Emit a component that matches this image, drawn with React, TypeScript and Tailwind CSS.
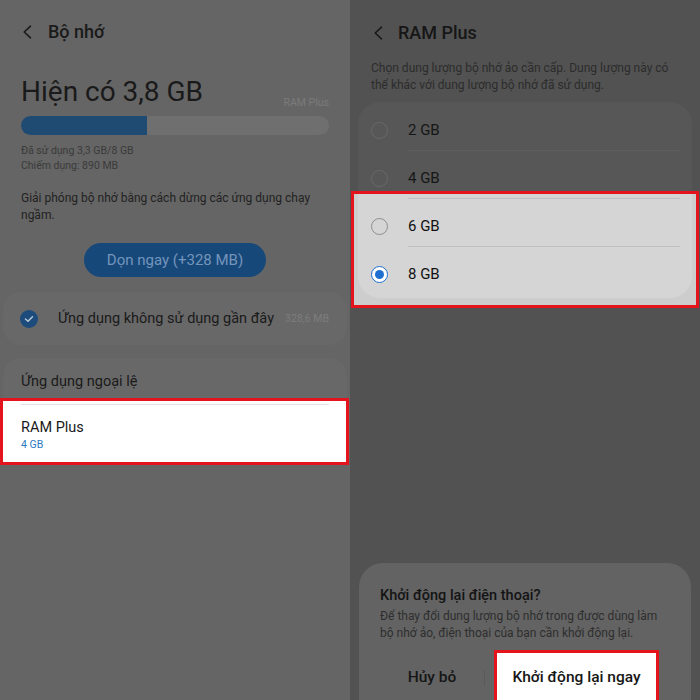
function Chevron() {
  return (
    <svg width="10" height="14" viewBox="0 0 10 14" fill="none" className="shrink-0">
      <path d="M8.5 1.2 L2.2 7 L8.5 12.8" stroke="#1a1a1a" strokeWidth="1.6" strokeLinecap="round" strokeLinejoin="round" />
    </svg>
  );
}

function Radio({ checked, light }: { checked?: boolean; light?: boolean }) {
  if (checked) {
    return (
      <span className="flex h-[17px] w-[17px] shrink-0 items-center justify-center rounded-full border-[1.5px] border-[#1e6fd0] bg-white">
        <span className="h-[9px] w-[9px] rounded-full bg-[#1e6fd0]" />
      </span>
    );
  }
  return (
    <span
      className={
        light
          ? "h-[17px] w-[17px] shrink-0 rounded-full border-[1.5px] border-[#8e8e8e]"
          : "h-[17px] w-[17px] shrink-0 rounded-full border-[1.5px] border-[#696969]"
      }
    />
  );
}

function SizeRow({
  label,
  className,
  checked,
  light,
}: {
  label: string;
  className: string;
  checked?: boolean;
  light?: boolean;
}) {
  return (
    <div className={`flex items-center gap-[20px] pl-[13px] ${className}`}>
      <Radio checked={checked} light={light} />
      <span className={light ? "text-[15px] text-[#111]" : "text-[15px] text-[#161616]"}>{label}</span>
    </div>
  );
}

export default function App() {
  return (
    <div className="flex h-[700px] w-[700px] overflow-hidden font-[Roboto,'Noto_Sans',sans-serif]">
      {/* Bộ nhớ */}
      <section className="flex w-[350px] flex-col bg-[#656565] text-[#1a1a1a]">
        <header className="flex h-[64px] items-center gap-[16px] pl-[22px]">
          <Chevron />
          <h1 className="text-[18px] font-medium leading-[24px]">Bộ nhớ</h1>
        </header>

        <div className="mt-[11px] flex items-end justify-between px-[21px]">
          <p className="text-[28px] leading-[34px]">Hiện có 3,8 GB</p>
          <span className="text-[10.5px] leading-[13px] text-[#7b7b7b]">RAM Plus</span>
        </div>

        <div className="mx-[21px] mt-[7px] h-[19px] overflow-hidden rounded-full bg-[#6f6f6f]">
          <div className="h-full w-[126px] bg-[#1f4a72]" />
        </div>

        <div className="mt-[8px] px-[21px] text-[10.5px] leading-[15px] text-[#3a3a3a]">
          <p>Đã sử dụng 3,3 GB/8 GB</p>
          <p>Chiếm dụng: 890 MB</p>
        </div>

        <p className="mt-[17px] whitespace-nowrap px-[21px] text-[12px] leading-[17px] text-[#222]">
          Giải phóng bộ nhớ bằng cách dừng các ứng dụng chạy
          <br />
          ngầm.
        </p>

        <button
          type="button"
          className="mx-auto mt-[19px] h-[34px] w-[182px] rounded-full bg-[#17487a] text-[15px] text-[#7495bb]"
        >
          Dọn ngay (+328 MB)
        </button>

        <div className="mx-[3px] mt-[15px] flex h-[53px] items-center rounded-[18px] bg-[#686868] pl-[17px] pr-[18px]">
          <span className="flex h-[18px] w-[18px] shrink-0 items-center justify-center rounded-full bg-[#1c4b7c]">
            <svg width="10" height="8" viewBox="0 0 10 8" fill="none">
              <path d="M1.5 4 L4 6.3 L8.5 1.7" stroke="#b8c6d4" strokeWidth="1.5" strokeLinecap="round" strokeLinejoin="round" />
            </svg>
          </span>
          <span className="ml-[20px] flex-1 text-[14.5px]">Ứng dụng không sử dụng gần đây</span>
          <span className="text-[10.5px] text-[#7d7d7d]">328,6 MB</span>
        </div>

        <div className="mx-[3px] mt-[13px] rounded-t-[18px] bg-[#686868] pb-[6px] pl-[18px] pt-[14px]">
          <p className="text-[14.5px] leading-[20px]">Ứng dụng ngoại lệ</p>
        </div>

        <div className="h-[67px] w-[349px] border-[3px] border-[#e3141c] bg-white">
          <div className="ml-[18px] mr-[17px] mt-[3px] h-px bg-[#e4e4e4]" />
          <p className="ml-[18px] mt-[14px] text-[14.5px] leading-[18px] text-[#1a1a1a]">RAM Plus</p>
          <p className="ml-[18px] mt-[1px] text-[10.5px] leading-[14px] text-[#2b7bc4]">4 GB</p>
        </div>
      </section>

      {/* RAM Plus */}
      <section className="flex w-[350px] flex-col bg-[#525252] text-[#161616]">
        <header className="flex h-[45px] items-center gap-[15px] pl-[23px] pt-[21px]">
          <Chevron />
          <h1 className="text-[18px] font-medium leading-[24px]">RAM Plus</h1>
        </header>

        <p className="mt-[15px] whitespace-nowrap px-[21px] text-[12px] leading-[17px] text-[#2c2c2c]">
          Chọn dung lượng bộ nhớ ảo cần cấp. Dung lượng này có
          <br />
          thể khác với dung lượng bộ nhớ đã sử dụng.
        </p>

        <div className="mx-[8px] mt-[8px] rounded-t-[22px] bg-[#575757]">
          <SizeRow label="2 GB" className="h-[48px] pt-[8px]" />
          <div className="ml-[50px] mr-[12px] h-px bg-[#5e5e5e]" />
          <SizeRow label="4 GB" className="h-[40px] pt-[14px]" />
        </div>

        <div className="mx-[1px] border-[3px] border-[#e3141c] bg-[#cdcdcd] pb-[7px]">
          <div className="mx-[4px] rounded-b-[22px] bg-[#d5d5d5] pb-[4px] pt-[4px]">
            <div className="ml-[50px] mr-[12px] h-px bg-[#c0c0c4]" />
            <SizeRow label="6 GB" className="h-[47px] pt-[7px]" light />
            <div className="ml-[50px] mr-[12px] h-px bg-[#c0c0c4]" />
            <SizeRow label="8 GB" className="h-[47px] pt-[7px]" light checked />
          </div>
        </div>

        <div className="mx-[9px] mt-[255px] rounded-t-[24px] bg-[#636363] px-[21px] pt-[23px]">
          <p className="text-[14.5px] font-medium leading-[20px] text-[#141414]">Khởi động lại điện thoại?</p>
          <p className="mt-[2px] whitespace-nowrap text-[12px] leading-[17px] text-[#2e2e2e]">
            Để thay đổi dung lượng bộ nhớ trong được dùng làm
            <br />
            bộ nhớ ảo, điện thoại của bạn cần khởi động lại.
          </p>
          <div className="mt-[8px] flex h-[56px] items-center">
            <button type="button" className="w-[104px] text-center text-[15.5px] font-medium text-[#161616]">
              Hủy bỏ
            </button>
            <span className="h-[16px] w-px bg-[#5a5a5a]" />
            <button
              type="button"
              className="ml-[9px] h-[56px] w-[165px] border-[3px] border-[#e3141c] bg-white text-[15.5px] font-medium text-[#161616]"
            >
              Khởi động lại ngay
            </button>
          </div>
        </div>
      </section>
    </div>
  );
}
